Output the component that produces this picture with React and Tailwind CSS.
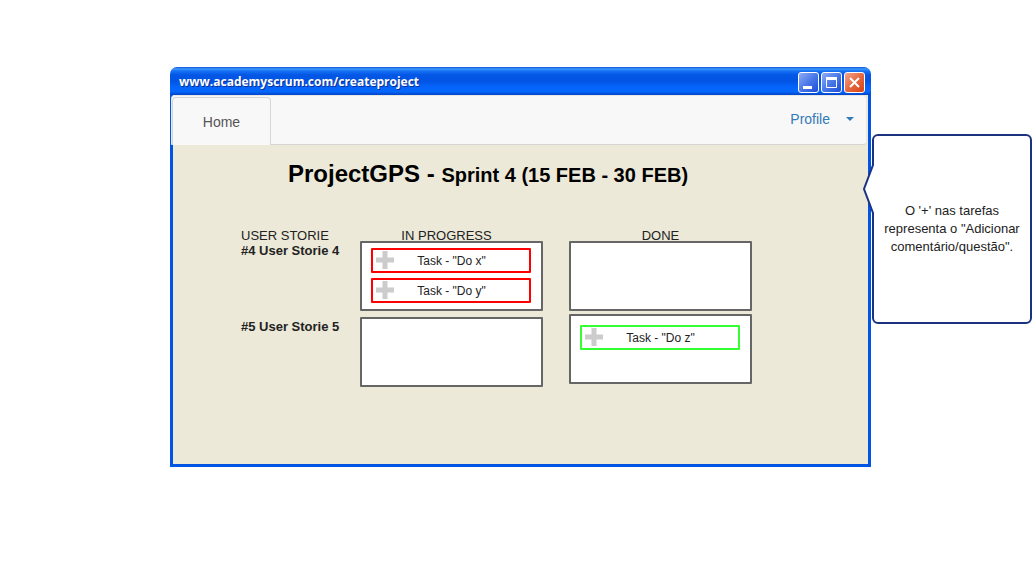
import React from "react";

const columns = [
  {
    name: "IN PROGRESS",
    width: "w-[183px]",
    gap: "gap-[6px]",
    heading: "pr-[10px]",
    cells: [
      {
        story: "#4 User Storie 4",
        pad: "pt-[5px]",
        tasks: [
          { text: 'Task - "Do x"', border: "border-[#ff0000]" },
          { text: 'Task - "Do y"', border: "border-[#ff0000]" },
        ],
      },
      { story: "#5 User Storie 5", pad: "pt-[5px]", tasks: [] },
    ],
  },
  {
    name: "DONE",
    width: "w-[183px]",
    gap: "gap-[3px]",
    heading: "pr-0",
    cells: [
      { story: "#4 User Storie 4", pad: "pt-[5px]", tasks: [] },
      {
        story: "#5 User Storie 5",
        pad: "pt-[9px]",
        tasks: [{ text: 'Task - "Do z"', border: "border-[#33ff33]" }],
      },
    ],
  },
];

function WindowButton({ label, close, children }) {
  return (
    <button
      type="button"
      aria-label={label}
      className={
        "flex size-[21px] items-center justify-center rounded-[3px] border border-white " +
        (close
          ? "bg-gradient-to-br from-[#f0a48c] via-[#e5683f] to-[#d8400c]"
          : "bg-gradient-to-br from-[#8fabf5] via-[#4a78e8] to-[#1c4bd8]")
      }
    >
      <svg width="19" height="19" viewBox="0 0 19 19" fill="none" aria-hidden="true">
        {children}
      </svg>
    </button>
  );
}

function TitleBar() {
  return (
    <header className="flex h-7 items-center justify-between rounded-t-[7px] bg-[linear-gradient(to_bottom,#0a56d8_0%,#3f97ff_7%,#1673f5_14%,#0457e5_28%,#0254e3_50%,#0466ff_75%,#0466fb_88%,#0243c4_100%)] pl-[9px] pr-[6px] pt-[2px]">
      <span className="pb-px font-['Open_Sans','Noto_Sans',sans-serif] text-[12px] leading-4 font-bold text-white [text-shadow:1px_1px_0_#0a2f96]">
        www.academyscrum.com/createproject
      </span>
      <span className="flex gap-[2px]">
        <WindowButton label="Minimize">
          <path d="M4 13h9v3H4z" fill="#fff" />
        </WindowButton>
        <WindowButton label="Maximize">
          <path d="M4.5 5.5h10v9h-10z" stroke="#fff" />
          <path d="M4 4h11v3H4z" fill="#fff" />
        </WindowButton>
        <WindowButton label="Close" close>
          <path d="M5 5l9 9M14 5l-9 9" stroke="#fff" strokeWidth="2" />
        </WindowButton>
      </span>
    </header>
  );
}

function NavBar() {
  return (
    <nav className="-ml-[2px] mr-px flex h-[50px] items-start justify-between rounded-[4px] rounded-bl-none border border-[#e7e7e7] border-b-[#d5d5d5] bg-[#f8f8f8] text-[14px] leading-5">
      <a
        href="#home"
        className="mt-px flex h-12 w-[99px] items-center justify-center rounded-t-[4px] border border-b-0 border-[#d5d5d5] bg-[#f8f8f8] text-[#555555]"
      >
        Home
      </a>
      <button type="button" className="mr-3 mt-[13px] flex items-center gap-4 text-[#337ab7]">
        Profile
        <svg width="8" height="4" viewBox="0 0 8 4" aria-hidden="true">
          <path d="M0 0h8L4 4z" fill="#337ab7" />
        </svg>
      </button>
    </nav>
  );
}

function Task({ text, border }) {
  return (
    <li className={"flex h-[25px] items-center rounded-[1px] border-2 bg-white pl-[3px] pr-5 " + border}>
      <button type="button" aria-label="Adicionar comentário/questão" className="pb-px">
        <svg width="18" height="18" viewBox="0 0 18 18" className="block" aria-hidden="true">
          <path d="M6.5 0h5v6.5H18v5h-6.5V18h-5v-6.5H0v-5h6.5z" fill="#cccccc" />
        </svg>
      </button>
      <span className="flex-1 text-center text-[12px] leading-4">{text}</span>
    </li>
  );
}

function Column({ column }) {
  return (
    <section className={column.width}>
      <h2 className={"text-center text-[13px] leading-[10px] " + column.heading}>{column.name}</h2>
      <div className={"flex flex-col " + column.gap}>
        {column.cells.map((cell) => (
          <ul
            key={cell.story}
            aria-label={cell.story}
            className={
              "flex h-[70px] flex-col gap-[5px] rounded-[1px] border-2 border-[#666666] bg-white pl-[9px] pr-[10px] " +
              cell.pad
            }
          >
            {cell.tasks.map((task) => (
              <Task key={task.text} {...task} />
            ))}
          </ul>
        ))}
      </div>
    </section>
  );
}

export default function App() {
  return (
    <main className="flex min-h-screen items-start bg-white pl-[170px] pr-1 pt-[67px] font-['Liberation_Sans',Arial,sans-serif] text-[#222222]">
      <section className="min-w-0 flex-1">
        <TitleBar />
        <div className="border-3 border-t-0 border-[#0055e5] bg-[#ece9d8] pb-[77px]">
          <NavBar />
          <h1 className="ml-[115px] mt-[15px] text-[24px] leading-7 font-bold text-black">
            ProjectGPS - <span className="text-[20px]">Sprint 4 (15 FEB - 30 FEB)</span>
          </h1>
          <div className="ml-[68px] mt-[42px] flex">
            <section className="w-[119px]">
              <h2 className="text-[13px] leading-[10px]">USER STORIE</h2>
              <ul className="flex flex-col gap-[60px] pt-[2px] text-[13px] leading-4 font-bold">
                <li>#4 User Storie 4</li>
                <li>#5 User Storie 5</li>
              </ul>
            </section>
            <div className="flex gap-[26px]">
              {columns.map((column) => (
                <Column key={column.name} column={column} />
              ))}
            </div>
          </div>
        </div>
      </section>
      <aside className="relative ml-px mt-[67px] flex h-[190px] w-[160px] shrink-0 items-center justify-center rounded-[6px] border-2 border-[#1b3281] bg-white px-2 text-center text-[13px] leading-[18px]">
        <svg
          width="14"
          height="52"
          viewBox="0 0 14 52"
          className="absolute -left-[12px] top-[27px]"
          aria-hidden="true"
        >
          <path d="M14 0H11L2 26L11 52H14z" fill="#fff" />
          <path d="M11 0V2L2 26L11 50V52" fill="none" stroke="#1b3281" strokeWidth="2" />
        </svg>
        <p>O '+' nas tarefas representa o "Adicionar comentário/questão".</p>
      </aside>
    </main>
  );
}
